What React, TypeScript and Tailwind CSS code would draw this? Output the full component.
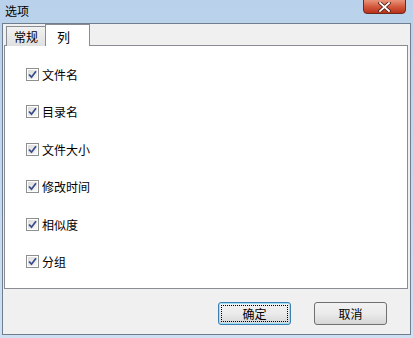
import React from "react";

const font = { fontFamily: '"SimSun", "Noto Sans CJK SC", sans-serif' };

const items = ["文件名", "目录名", "文件大小", "修改时间", "相似度", "分组"];

function CheckBox() {
  return (
    <div className="w-[13px] h-[13px] border border-[#8e8f8f] bg-white p-px">
      <div className="w-full h-full bg-gradient-to-br from-[#dcdcdc] to-[#f8f8f8] flex items-center justify-center">
        <svg width="9" height="9" viewBox="0 0 9 9">
          <path d="M1 4.5 L3.5 7.2 L8 1.2" fill="none" stroke="#3b4e8c" strokeWidth="1.8" />
        </svg>
      </div>
    </div>
  );
}

function Button({ label, focused }: { label: string; focused?: boolean }) {
  return (
    <div
      className={
        "w-[73px] h-[23px] rounded-[3px] border flex items-center justify-center p-[2px] bg-gradient-to-b from-[#f2f2f2] via-[#ebebeb] to-[#d6d6d6] " +
        (focused ? "border-[#3c7fb1] shadow-[inset_0_0_0_1px_#9ee0f8]" : "border-[#707070]")
      }
    >
      <div
        className={
          "w-full h-full flex items-center justify-center text-[12px] text-black " +
          (focused ? "border border-dotted border-black" : "")
        }
      >
        {label}
      </div>
    </div>
  );
}

export default function App() {
  return (
    <div
      className="w-[413px] h-[338px] flex flex-col bg-gradient-to-b from-[#b9d1ea] via-[#c4d9ef] to-[#cfe0f3] overflow-hidden"
      style={font}
    >
      {/* Title bar */}
      <div className="h-[23px] flex items-start justify-between pl-[5px] pr-[7px]">
        <span className="mt-[4px] text-[12px] leading-[14px] text-black">选项</span>
        <div className="w-[43px] h-[15px] -mt-px rounded-b-[4px] border border-[#6b2a20] bg-gradient-to-b from-[#e8947c] via-[#d45a3e] to-[#b8301a] flex items-center justify-center">
          <svg width="13" height="10" viewBox="0 0 13 10">
            <path d="M2 1 L11 9 M11 1 L2 9" stroke="#4a1a12" strokeWidth="3.4" strokeLinecap="square" />
            <path d="M2 1 L11 9 M11 1 L2 9" stroke="#ffffff" strokeWidth="1.8" strokeLinecap="square" />
          </svg>
        </div>
      </div>

      {/* Client area */}
      <div className="ml-[2px] mr-[2px] mb-[3px] flex-1 border border-[#6f7d8f] bg-[#f0f0f0] flex flex-col">
        <div className="ml-px mr-[2px] flex flex-col">
          {/* Tabs */}
          <div className="flex items-end pl-[2px] h-[22px] -mb-px relative z-10">
            <div className="h-[20px] w-[40px] border border-[#898c95] border-b-0 bg-gradient-to-b from-[#f2f2f2] to-[#e0e0e0] flex items-center justify-center text-[12px] text-black">
              常规
            </div>
            <div className="h-[22px] w-[45px] -ml-px border border-[#898c95] border-b-0 bg-white flex items-start pl-[11px] pt-[2px] text-[13px] text-black">
              列
            </div>
          </div>
          {/* Panel */}
          <div className="h-[244px] border border-[#898c95] bg-white flex flex-col pt-[21px] pl-[21px] overflow-hidden">
            {items.map((t) => (
              <div key={t} className="h-[37.4px] shrink-0 flex items-start gap-[3px]">
                <div className="mt-px">
                  <CheckBox />
                </div>
                <span className="text-[12px] leading-[15px] text-black">{t}</span>
              </div>
            ))}
          </div>
        </div>

        {/* Buttons */}
        <div className="flex justify-end gap-[23px] pr-[23px] mt-[13px]">
          <Button label="确定" focused />
          <Button label="取消" />
        </div>
      </div>
    </div>
  );
}
